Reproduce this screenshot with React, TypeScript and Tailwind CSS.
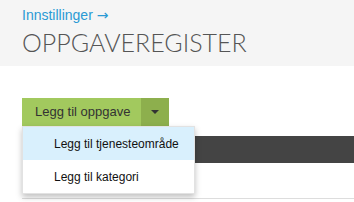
import React from 'react';

const App = () => {
  return (
    <div className="w-[354px] h-[202px] overflow-hidden bg-white font-['Liberation_Sans',Arial,sans-serif]">
      {/* Page header */}
      <div className="h-[66px] bg-[#f5f5f5] pl-[22px] pt-[6px]">
        <a className="block text-[14px] leading-[18px] text-[#2a9ad4]">
          Innstillinger <span className="font-['DejaVu_Sans',sans-serif] text-[14px] leading-[18px]">→</span>
        </a>
        <h1 className="mt-[3px] font-['Lato',sans-serif] font-light text-[25px] leading-[30px] text-[#555]">
          OPPGAVEREGISTER
        </h1>
      </div>

      {/* Content */}
      <div className="relative pl-[22px] pt-[32px]">
        <div className="flex h-[28px] w-[147px]">
          <button className="flex-1 bg-[#a2c95e] text-[13px] text-[#333] text-left pl-[13px]">
            Legg til oppgave
          </button>
          <button className="w-[28px] bg-[#8daf4d] flex items-center justify-center">
            <span className="block w-0 h-0 border-l-[4px] border-r-[4px] border-t-[4px] border-l-transparent border-r-transparent border-t-[#333]" />
          </button>
        </div>

        <div className="mt-[10px] h-[27px] bg-[#444]" />
        <div className="mt-[35px] h-px bg-[#ddd]" />

        {/* Dropdown menu */}
        <div className="absolute left-[22px] top-[60px] w-[173px] bg-white border border-[#e2e2e2] shadow-[0_3px_6px_rgba(0,0,0,0.25)] text-[12px] text-[#111]">
          <div className="h-[33px] bg-[#d9f0fd] pl-[31px] flex items-center">Legg til tjenesteområde</div>
          <div className="h-[33px] pl-[31px] flex items-center">Legg til kategori</div>
        </div>
      </div>
    </div>
  );
};

export default App;
